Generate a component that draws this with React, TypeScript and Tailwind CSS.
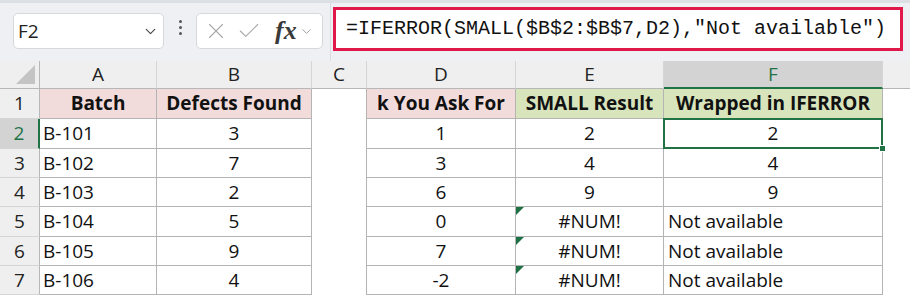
import { ChevronDown, X, Check } from 'lucide-react'

const colWidths = ['w-[40px]', 'w-[117px]', 'w-[155px]', 'w-[55px]', 'w-[149px]', 'w-[148px]', 'w-[219px]']
const rowHeights = ['h-[30px]', 'h-[30px]', 'h-[29px]', 'h-[29px]', 'h-[30px]', 'h-[29px]', 'h-[29px]']

const rows = [
  { batch: 'B-102', defects: '7', k: '3', small: '4', wrapped: '4' },
  { batch: 'B-103', defects: '2', k: '6', small: '9', wrapped: '9' },
  { batch: 'B-104', defects: '5', k: '0', small: '#NUM!', wrapped: 'Not available' },
  { batch: 'B-105', defects: '9', k: '7', small: '#NUM!', wrapped: 'Not available' },
  { batch: 'B-106', defects: '4', k: '-2', small: '#NUM!', wrapped: 'Not available' },
]

function ErrorFlag() {
  return (
    <svg className="absolute left-0 top-0" width="8" height="8" viewBox="0 0 8 8">
      <polygon points="0,0 8,0 0,8" fill="#1e7145" />
    </svg>
  )
}

function FormulaBar() {
  return (
    <div className="flex h-[61px] items-start border-t-[3px] border-[#dcdfe3] bg-[#eef0f3]">
      {/* Name box */}
      <div className="ml-[13px] mt-[10px] flex h-[36px] w-[151px] items-center justify-between rounded-[5px] border border-[#d6d8db] bg-white pl-[4px] pr-[4px]">
        <span className="text-[19px] text-[#222]">F2</span>
        <ChevronDown className="h-[17px] w-[17px] text-[#444]" strokeWidth={1.6} />
      </div>
      {/* dots */}
      <div className="mt-[17px] flex w-[32px] flex-col items-center gap-[3px]">
        <span className="h-[3px] w-[3px] rounded-full bg-[#555]" />
        <span className="h-[3px] w-[3px] rounded-full bg-[#555]" />
        <span className="h-[3px] w-[3px] rounded-full bg-[#555]" />
      </div>
      {/* fx box */}
      <div className="mt-[10px] flex h-[36px] w-[127px] items-center rounded-[5px] border border-[#d6d8db] bg-white pl-[6px]">
        <X className="h-[26px] w-[26px] text-[#a9a9a9]" strokeWidth={1} />
        <Check className="ml-[7px] h-[26px] w-[26px] text-[#a9a9a9]" strokeWidth={1} />
        <span className="ml-[13px] font-['Liberation_Serif',serif] text-[26px] font-bold italic leading-none text-[#3a3a3a]">fx</span>
        <ChevronDown className="ml-[2px] h-[15px] w-[15px] text-[#9a9a9a]" strokeWidth={1.5} />
      </div>
      <div className="ml-[7px] h-[58px] w-px bg-[#d9dce0]" />
      {/* formula */}
      <div className="ml-[2px] mt-[4px] flex h-[44px] w-[570px] items-center border-[3px] border-[#e0194a] bg-white pl-[10px]">
        <span className="whitespace-pre font-['Liberation_Mono',monospace] text-[20px] text-[#111]">
          =IFERROR(SMALL($B$2:$B$7,D2),"Not available")
        </span>
      </div>
    </div>
  )
}

export default function App() {
  const rowHead = 'flex items-center justify-center border-r border-b border-r-[#b7b7b7] border-b-[#d5d5d5] bg-[#efefef] text-[19px] text-[#222]'
  const cell = 'flex items-center border-r border-b border-[#b4b4b4] text-[19px] text-[#111]'
  const colHead = 'flex items-center justify-center border-r border-b border-r-[#d5d5d5] border-b-[#b7b7b7] bg-[#efefef] text-[19px] text-[#222]'

  return (
    <div className="h-[298px] w-[910px] overflow-hidden bg-white font-['Open_Sans',sans-serif] leading-none">
      <FormulaBar />

      {/* column headers */}
      <div className="flex h-[28px]">
        <div className={`${colWidths[0]} relative flex items-end justify-end border-r border-b border-r-[#b7b7b7] border-b-[#b7b7b7] bg-[#efefef] pb-[4px] pr-[4px]`}>
          <svg width="19" height="19" viewBox="0 0 19 19">
            <polygon points="19,0 19,19 0,19" fill="#c4c4c4" />
          </svg>
        </div>
        {['A', 'B', 'C', 'D', 'E'].map((c, i) => (
          <div key={c} className={`${colWidths[i + 1]} ${colHead}`}>{c}</div>
        ))}
        <div className={`${colWidths[6]} flex items-center justify-center border-r border-b-2 border-r-[#d5d5d5] border-b-[#217346] bg-[#d3d3d3] text-[19px] text-[#217346]`}>F</div>
        <div className="flex-1 border-b border-[#b7b7b7] bg-[#efefef]" />
      </div>

      {/* row 1 */}
      <div className={`flex ${rowHeights[0]}`}>
        <div className={`${colWidths[0]} ${rowHead}`}>1</div>
        <div className={`${colWidths[1]} ${cell} justify-center bg-[#f2dcdb] font-bold`}>Batch</div>
        <div className={`${colWidths[2]} ${cell} justify-center bg-[#f2dcdb] font-bold`}>Defects Found</div>
        <div className={`${colWidths[3]} border-r border-[#b4b4b4]`} />
        <div className={`${colWidths[4]} ${cell} justify-center bg-[#f2dcdb] font-bold`}>k You Ask For</div>
        <div className={`${colWidths[5]} ${cell} justify-center bg-[#d8e4bc] font-bold`}>SMALL Result</div>
        <div className={`${colWidths[6]} ${cell} justify-center bg-[#d8e4bc] font-bold`}>Wrapped in IFERROR</div>
      </div>

      {/* row 2 (active) */}
      <div className={`flex ${rowHeights[1]}`}>
        <div className={`${colWidths[0]} flex items-center justify-center border-r-2 border-b border-r-[#217346] border-b-[#d5d5d5] bg-[#d3d3d3] text-[19px] text-[#217346]`}>2</div>
        <div className={`${colWidths[1]} ${cell} pl-[3px]`}>B-101</div>
        <div className={`${colWidths[2]} ${cell} justify-center`}>3</div>
        <div className={`${colWidths[3]} border-r border-[#b4b4b4]`} />
        <div className={`${colWidths[4]} ${cell} justify-center`}>1</div>
        <div className={`${colWidths[5]} ${cell} justify-center`}>2</div>
        <div className={`${colWidths[6]} ${cell} relative justify-center`}>
          2
          <div className="absolute -left-px -top-px bottom-[-1px] right-[-1px] border-2 border-[#217346]" />
          <div className="absolute bottom-[-4px] right-[-4px] h-[7px] w-[7px] border border-white bg-[#217346]" />
        </div>
      </div>

      {rows.map((r, i) => (
        <div key={r.batch} className={`flex ${rowHeights[i + 2]}`}>
          <div className={`${colWidths[0]} ${rowHead}`}>{i + 3}</div>
          <div className={`${colWidths[1]} ${cell} pl-[3px]`}>{r.batch}</div>
          <div className={`${colWidths[2]} ${cell} justify-center`}>{r.defects}</div>
          <div className={`${colWidths[3]} border-r border-[#b4b4b4]`} />
          <div className={`${colWidths[4]} ${cell} justify-center`}>{r.k}</div>
          <div className={`${colWidths[5]} ${cell} relative justify-center`}>
            {r.small === '#NUM!' && <ErrorFlag />}
            {r.small}
          </div>
          <div className={`${colWidths[6]} ${cell} ${r.wrapped.length > 2 ? 'pl-[4px]' : 'justify-center'}`}>{r.wrapped}</div>
        </div>
      ))}
    </div>
  )
}
